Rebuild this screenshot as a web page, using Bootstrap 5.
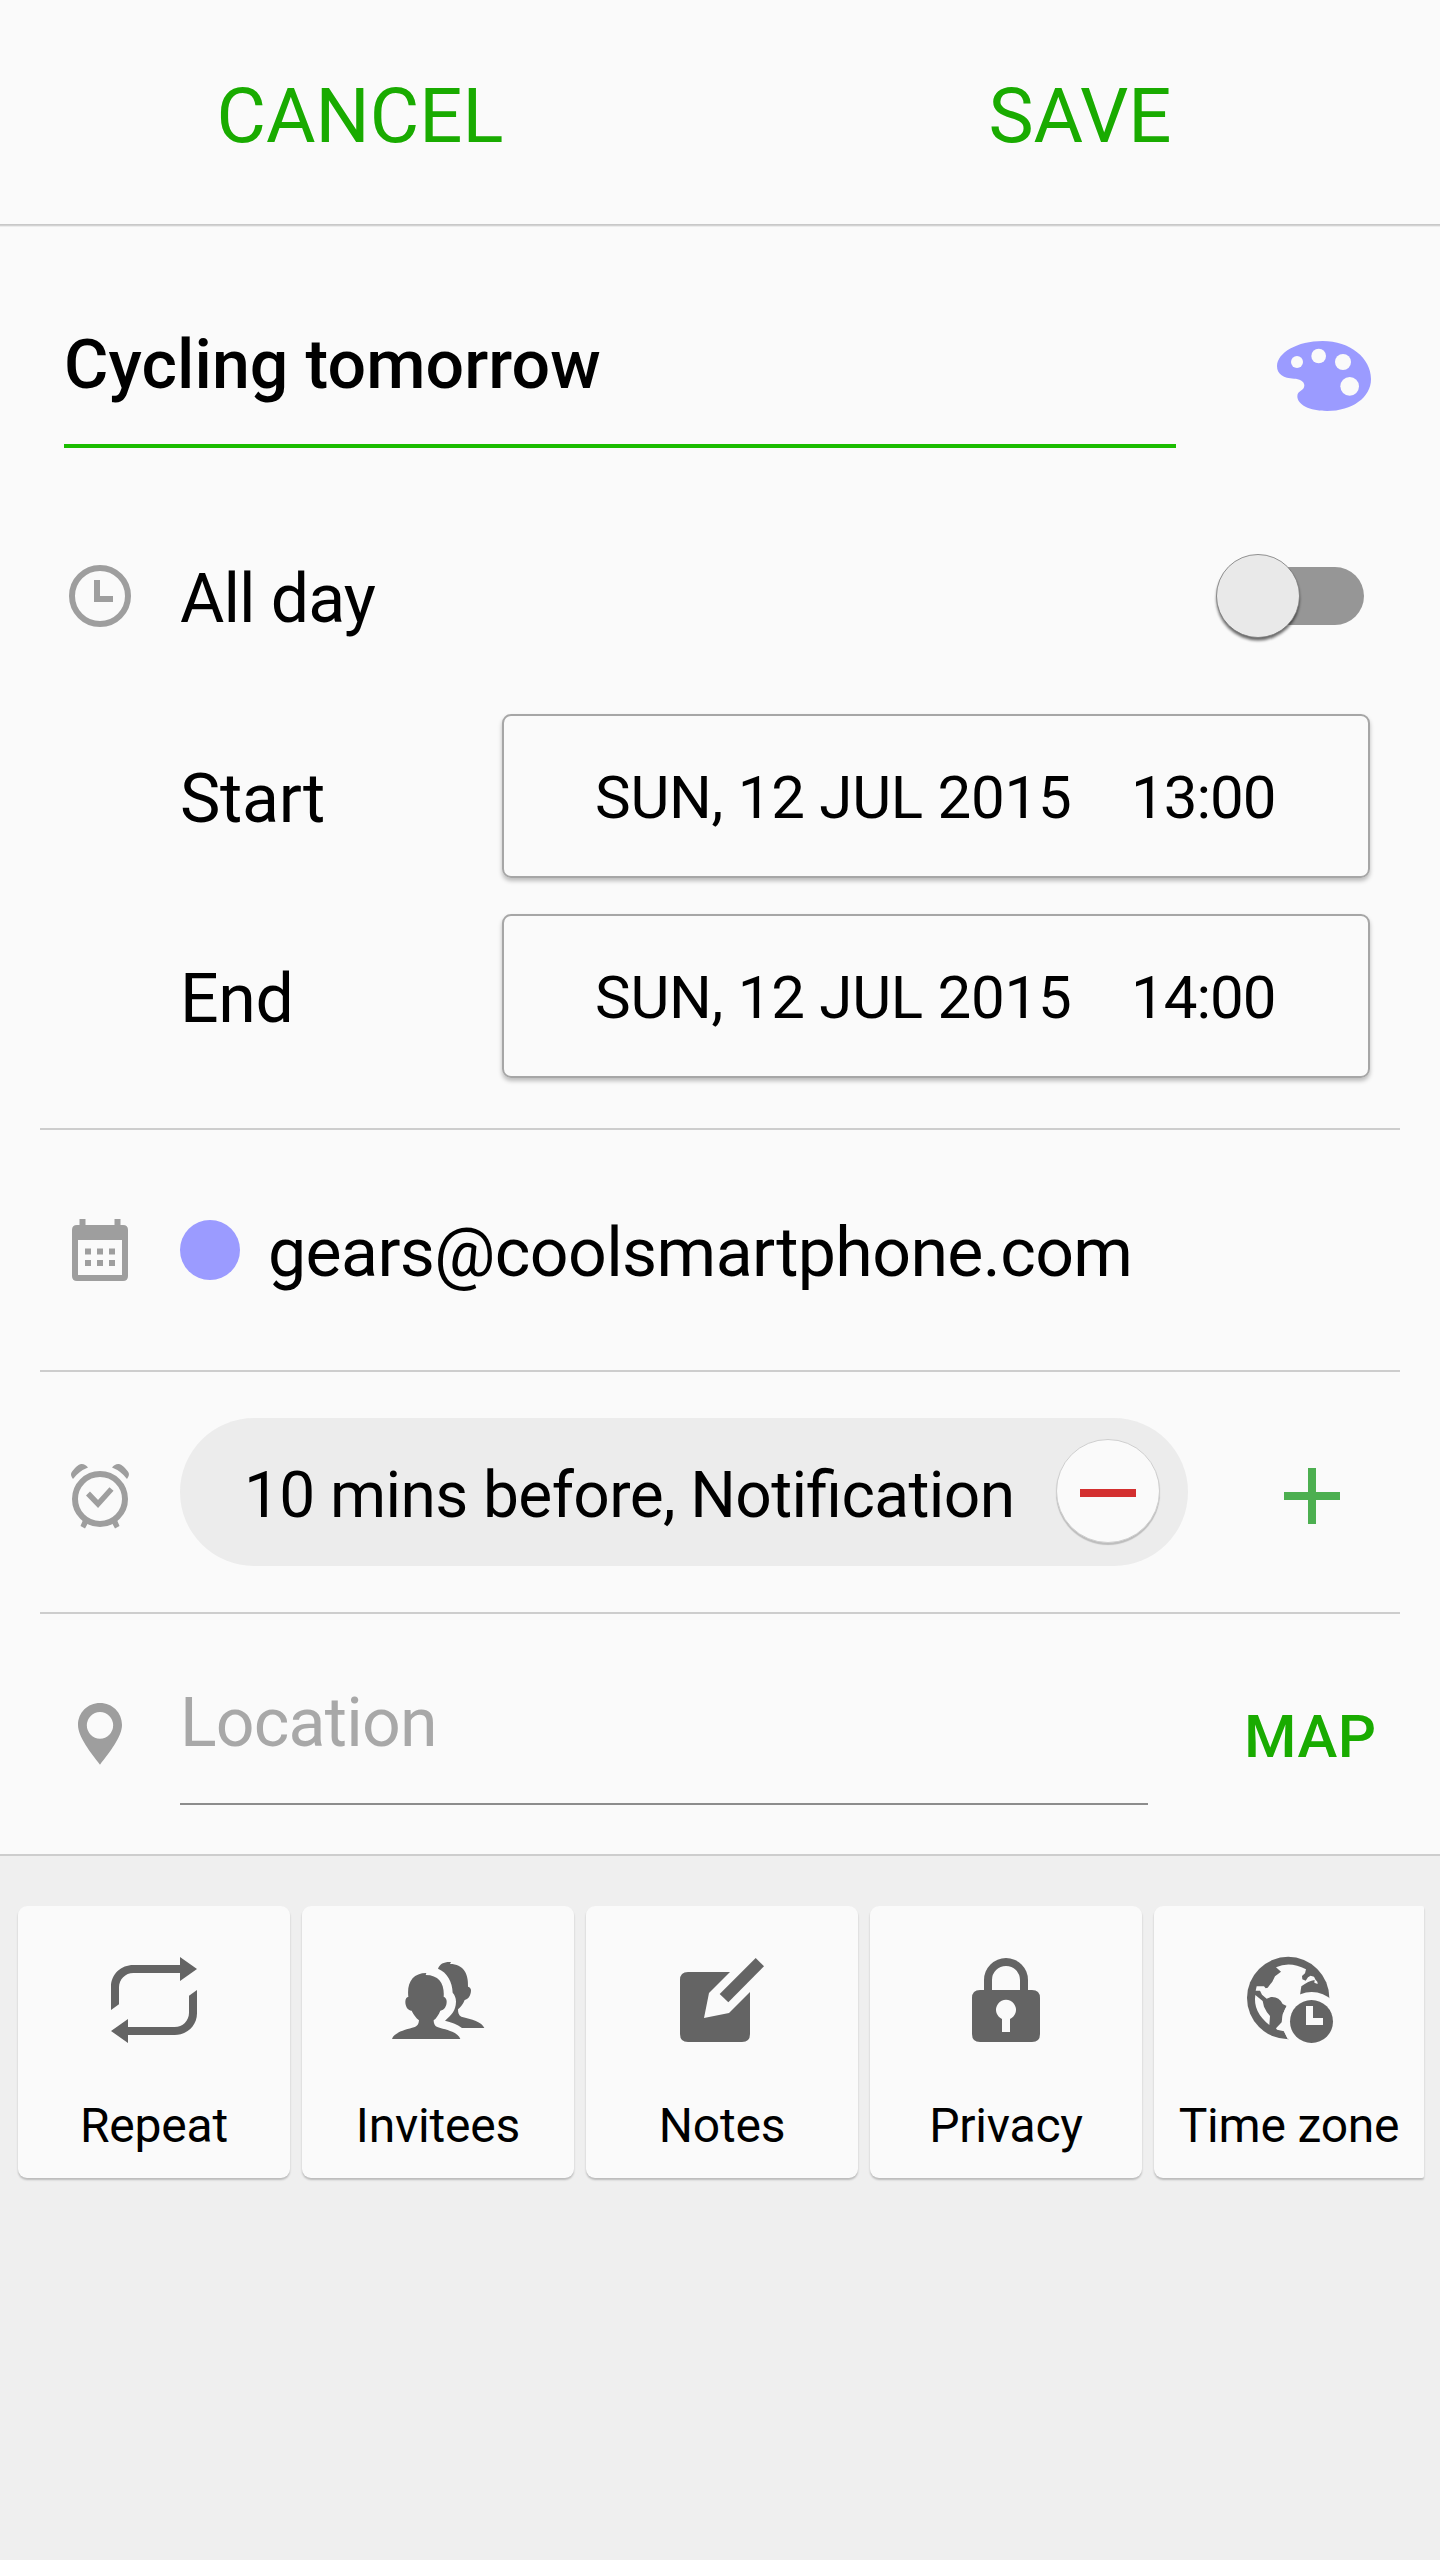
<!DOCTYPE html>
<html lang="en">
<head>
<meta charset="utf-8">
<meta name="viewport" content="width=device-width, initial-scale=1">
<title>Edit event</title>
<link rel="stylesheet" href="https://cdn.jsdelivr.net/npm/bootstrap@5.3.0/dist/css/bootstrap.min.css">
<style>
  body { font-family: Roboto, sans-serif; background: #efefef; color: #000; font-size: 68px; line-height: 80px; width: 1440px; min-height: 2560px; }
  svg { display: block; flex: none; }
  .sheet { background: #fafafa; height: 1856px; border-bottom: 2px solid #cdcdcd; }
  .topbar { height: 227px; padding-top: 66px; background: linear-gradient(#c8c8c8 0 1px, #d2d2d2 1px 2px, #ececec 2px 3px) bottom / 100% 3px no-repeat; }
  .topbar a { width: 720px; font-size: 76px; line-height: 100px; color: #19ab00; text-decoration: none; text-align: center; }
  .title-row { height: 293px; padding: 0 64px; }
  .title-field { width: 1112px; height: 221px; padding-top: 98px; border-bottom: 4px solid #1bbd00; font-weight: 500; letter-spacing: .1px; }
  .palette { margin: 114px 5px 0 0; }
  .form-line { padding-left: 69px; }
  .lead-icon { width: 111px; flex: none; }
  .line-text { padding-top: 6px; }
  .allday { height: 152px; padding-right: 74px; }
  .allday .line-text { letter-spacing: -.9px; }
  .toggle { width: 150px; height: 90px; }
  .when { padding: 0 70px 0 180px; height: 164px; }
  .when .line-text { letter-spacing: -.3px; }
  .when-start { margin-top: 42px; margin-bottom: 36px; }
  .when-box { width: 868px; height: 164px; border: 2px solid #a6a6a6; border-radius: 9px; box-shadow: 0 3px 4px rgba(0,0,0,.25); font-size: 60px; padding: 4px 0 0 91px; }
  .when-date { width: 536px; letter-spacing: -.25px; }
  .when-time { letter-spacing: -1px; }
  .rule { height: 2px; margin: 0 40px; background: #cdcdcd; }
  .after-when { margin-top: 50px; }
  .account { height: 240px; }
  .account .line-text { letter-spacing: -.6px; }
  .swatch { width: 60px; height: 60px; background: #9b9bff; margin-right: 28px; }
  .reminder { height: 240px; }
  .chip { width: 1008px; height: 148px; background: #ececec; font-size: 64px; padding: 0 28px 0 64px; }
  .chip .line-text { padding-top: 7px; letter-spacing: -.6px; font-feature-settings: "liga" 1; }
  .chip-x { width: 104px; height: 104px; background: #fafafa; border: 1px solid #cfcfcf; box-shadow: 0 2px 1px rgba(0,0,0,.2); margin-top: -2px; }
  .plus { margin-left: 96px; }
  .place { height: 240px; }
  .pin { padding: 89px 0 0 9px; }
  .place-field { width: 968px; flex: none; height: 191px; padding-top: 69px; border-bottom: 2px solid #8c8c8c; color: #a8a8a8; letter-spacing: -.8px; }
  .map-link { font-size: 60px; font-weight: 500; color: #19ab00; margin: 83px 0 0 96px; letter-spacing: .5px; }
  .tiles { padding: 50px 16px 12px 18px; gap: 12px; }
  .tile { width: 272px; height: 272px; flex: none; background: #fafafa; border-radius: 9px; box-shadow: 0 2px 2px rgba(0,0,0,.22); padding-top: 44px; font-size: 48px; line-height: 60px; letter-spacing: -.2px; }
  .tile span { margin-top: 46px; white-space: nowrap; }
  .tile-last { width: 270px; border-radius: 9px 2px 2px 9px; }
</style>
<script src="https://cdn.jsdelivr.net/npm/bootstrap@5.3.0/dist/js/bootstrap.bundle.min.js"></script>
</head>
<body>
<main class="sheet">
  <nav class="topbar d-flex align-items-start">
    <a href="#">CANCEL</a><a href="#">SAVE</a>
  </nav>

  <div class="title-row d-flex justify-content-between">
    <div class="title-field">Cycling tomorrow</div>
    <svg class="palette" width="94" height="70" viewBox="291 123 282 210">
      <path fill="#9b9bff" d="M291 199C291 158 352 123 428 123C510 123 573 174 573 237C573 292 517 333 441 333C388 333 352 314 352 289C352 271 373 274 373 256C373 243 357 236 342 236C311 236 291 222 291 199Z"/>
      <g fill="#fafafa"><circle cx="351" cy="186" r="18"/><circle cx="416" cy="168" r="22"/><circle cx="489" cy="186" r="24"/><circle cx="509" cy="259" r="28"/></g>
    </svg>
  </div>

  <div class="form-line allday d-flex align-items-center">
    <div class="lead-icon"><svg width="62" height="62" viewBox="0 0 62 62" fill="none" stroke="#9e9e9e" stroke-width="6"><circle cx="31" cy="31" r="28"/><path d="M28 15V34H44"/></svg></div>
    <span class="line-text">All day</span>
    <svg class="toggle ms-auto" viewBox="0 0 150 90" overflow="visible">
      <defs><filter id="soft" x="-20%" y="-20%" width="140%" height="140%"><feGaussianBlur stdDeviation="1.8"/></filter></defs>
      <rect x="45" y="16" width="103" height="58" rx="29" fill="#969696"/>
      <circle cx="42" cy="48" r="41.500" fill="#000" opacity=".6" filter="url(#soft)"/>
      <circle cx="42" cy="45" r="41.500" fill="#e9e9e9" stroke="#777" stroke-width=".8"/>
    </svg>
  </div>

  <div class="when when-start d-flex align-items-center justify-content-between">
    <span class="line-text">Start</span>
    <div class="when-box d-flex align-items-center"><span class="when-date">SUN, 12 JUL 2015</span><span class="when-time">13:00</span></div>
  </div>
  <div class="when d-flex align-items-center justify-content-between">
    <span class="line-text">End</span>
    <div class="when-box d-flex align-items-center"><span class="when-date">SUN, 12 JUL 2015</span><span class="when-time">14:00</span></div>
  </div>
  <div class="rule after-when"></div>

  <div class="form-line account d-flex align-items-center">
    <div class="lead-icon"><svg width="62" height="62" viewBox="69 1219 62 62" fill="#9e9e9e">
      <path fill-rule="evenodd" d="M77 1225H79.500V1219H85.500V1225H114.500V1219H120.500V1225H123Q128 1225 128 1230V1276Q128 1281 123 1281H77Q72 1281 72 1276V1230Q72 1225 77 1225ZM78 1240V1275H122V1240Z"/>
      <path d="M85 1248.500h6v6h-6zM97 1248.500h6v6h-6zM109 1248.500h6v6h-6zM85 1260h6v6h-6zM97 1260h6v6h-6zM109 1260h6v6h-6z"/></svg></div>
    <span class="swatch rounded-circle"></span>
    <span class="line-text">gears@coolsmartphone.com</span>
  </div>
  <div class="rule"></div>

  <div class="form-line reminder d-flex align-items-center">
    <div class="lead-icon pt-2"><svg width="62" height="66" viewBox="69 1463 62 66">
      <circle cx="100" cy="1499" r="25" fill="none" stroke="#9e9e9e" stroke-width="6"/>
      <path d="M88 1493.500L98 1504L111.500 1489" fill="none" stroke="#9e9e9e" stroke-width="5.500"/>
      <g fill="#9e9e9e"><path d="M73 1479C70 1475 71 1473 72.500 1471Q77 1465 81 1464Q85 1463.500 88 1467.500Q79 1471 73 1479Z"/><path d="M127 1479C130 1475 129 1473 127.500 1471Q123 1465 119 1464Q115 1463.500 112 1467.500Q121 1471 127 1479Z"/>
      <path d="M83 1520L80.500 1526L85 1528.500L88 1523ZM117 1520L119.500 1526L115 1528.500L112 1523Z"/></g></svg></div>
    <div class="chip rounded-pill d-flex align-items-center justify-content-between">
      <span class="line-text">10 mins before, Notification</span>
      <span class="chip-x rounded-circle d-flex align-items-center justify-content-center"><svg width="56" height="12" viewBox="0 0 56 12"><rect y="4" width="56" height="8" fill="#d32f2f"/></svg></span>
    </div>
    <svg class="plus" width="56" height="64" viewBox="0 -8 56 64"><path d="M28 0V56M0 28H56" stroke="#4caf50" stroke-width="8"/></svg>
  </div>
  <div class="rule"></div>

  <div class="form-line place d-flex align-items-start">
    <div class="lead-icon pin"><svg width="44" height="62" viewBox="234 189 132 186"><path fill="#9e9e9e" fill-rule="evenodd" d="M300 189C337 189 366 218 366 255C366 290 328 338 300 374C272 338 234 290 234 255C234 218 263 189 300 189ZM300 216A39.500 40 0 1 0 300 296A39.500 40 0 1 0 300 216Z"/></svg></div>
    <div class="place-field">Location</div>
    <div class="map-link">MAP</div>
  </div>
</main>

<section class="tiles d-flex">
  <div class="tile d-flex flex-column align-items-center">
    <svg width="100" height="100" viewBox="312 180 300 300" fill="#646464"><path d="M333 360V290C333 252 364 225 400 225H540V201L591 237L540 273V249H400C376 249 357 268 357 292V343Z"/><path d="M591 300V370C591 408 560 435 524 435H384V459L333 423L384 387V411H524C548 411 567 392 567 368V317Z"/></svg>
    <span>Repeat</span>
  </div>
  <div class="tile d-flex flex-column align-items-center">
    <svg width="100" height="100" viewBox="294 180 300 300" fill="#646464">
      <path d="M306 447C312 426 352 418 372 412C384 408 386 400 387 391C378 384 370 373 365 362C353 361 346 349 346 335C346 326 350 321 355 321C350 278 368 249 409 249L407 255C448 255 464 283 461 320C467 322 470 328 470 335C470 348 463 360 451 362C446 374 439 385 431 391C431 400 434 409 444 412C470 420 504 426 511 447Z"/>
      <path d="M444 236C450 221 462 215 483 216L480 222C520 222 536 251 534 290C540 291 543 296 543 302C542 316 536 327 524 330C520 341 512 351 504 358C504 368 506 377 514 380C545 388 576 395 583 414H516C502 402 483 396 465 392C485 374 497 362 498 335C498 324 494 314 488 308C487 276 472 247 444 236Z"/></svg>
    <span>Invitees</span>
  </div>
  <div class="tile d-flex flex-column align-items-center">
    <svg width="100" height="100" viewBox="276 180 300 300" fill="#646464"><path d="M324 246H450L387 309L372 384L447 369L510 306V432Q510 456 486 456H324Q300 456 300 432V270Q300 246 324 246Z"/><path d="M527 204L552 229L445 337L419 312Z"/></svg>
    <span>Notes</span>
  </div>
  <div class="tile d-flex flex-column align-items-center">
    <svg width="100" height="100" viewBox="288 180 300 300" fill="#646464"><path fill-rule="evenodd" d="M372 300V270A66 66 0 0 1 504 270V300H516Q540 300 540 324V432Q540 456 516 456H360Q336 456 336 432V324Q336 300 360 300ZM396 300H480V270A42 42 0 0 0 396 270ZM426 426H450V387A30 30 0 1 0 426 387Z"/></svg>
    <span>Privacy</span>
  </div>
  <div class="tile tile-last d-flex flex-column align-items-center">
    <svg width="100" height="100" viewBox="297 180 300 300">
      <circle cx="444.500" cy="324" r="123.500" fill="#646464"/>
      <path fill="#fafafa" d="M408 232Q450 213 498 238L495 250L486 258L487 268L497 272L504 262L512 257L522 260L527 270L532 275L533 282L523 278L524 270Q505 273 484 289L480 316L515 394L443 447L432 424L411 419L408 415L425 397L428 373L440 348L428 342Q417 319 393 321L380 326L366 314L360 302H347L350 289H372L377 295L383 293L397 275L405 259L423 245Z"/>
      <path fill="#fafafa" d="M346 315Q338 365 388 405L390 378Q379 366 372 350L368 333Z"/>
      <circle cx="515" cy="394" r="88" fill="#fafafa"/>
      <circle cx="514.500" cy="394.500" r="64.500" fill="#646464"/>
      <path fill="#fafafa" d="M498 348H519V384H549V405H498Z"/></svg>
    <span>Time zone</span>
  </div>
</section>
</body>
</html>
